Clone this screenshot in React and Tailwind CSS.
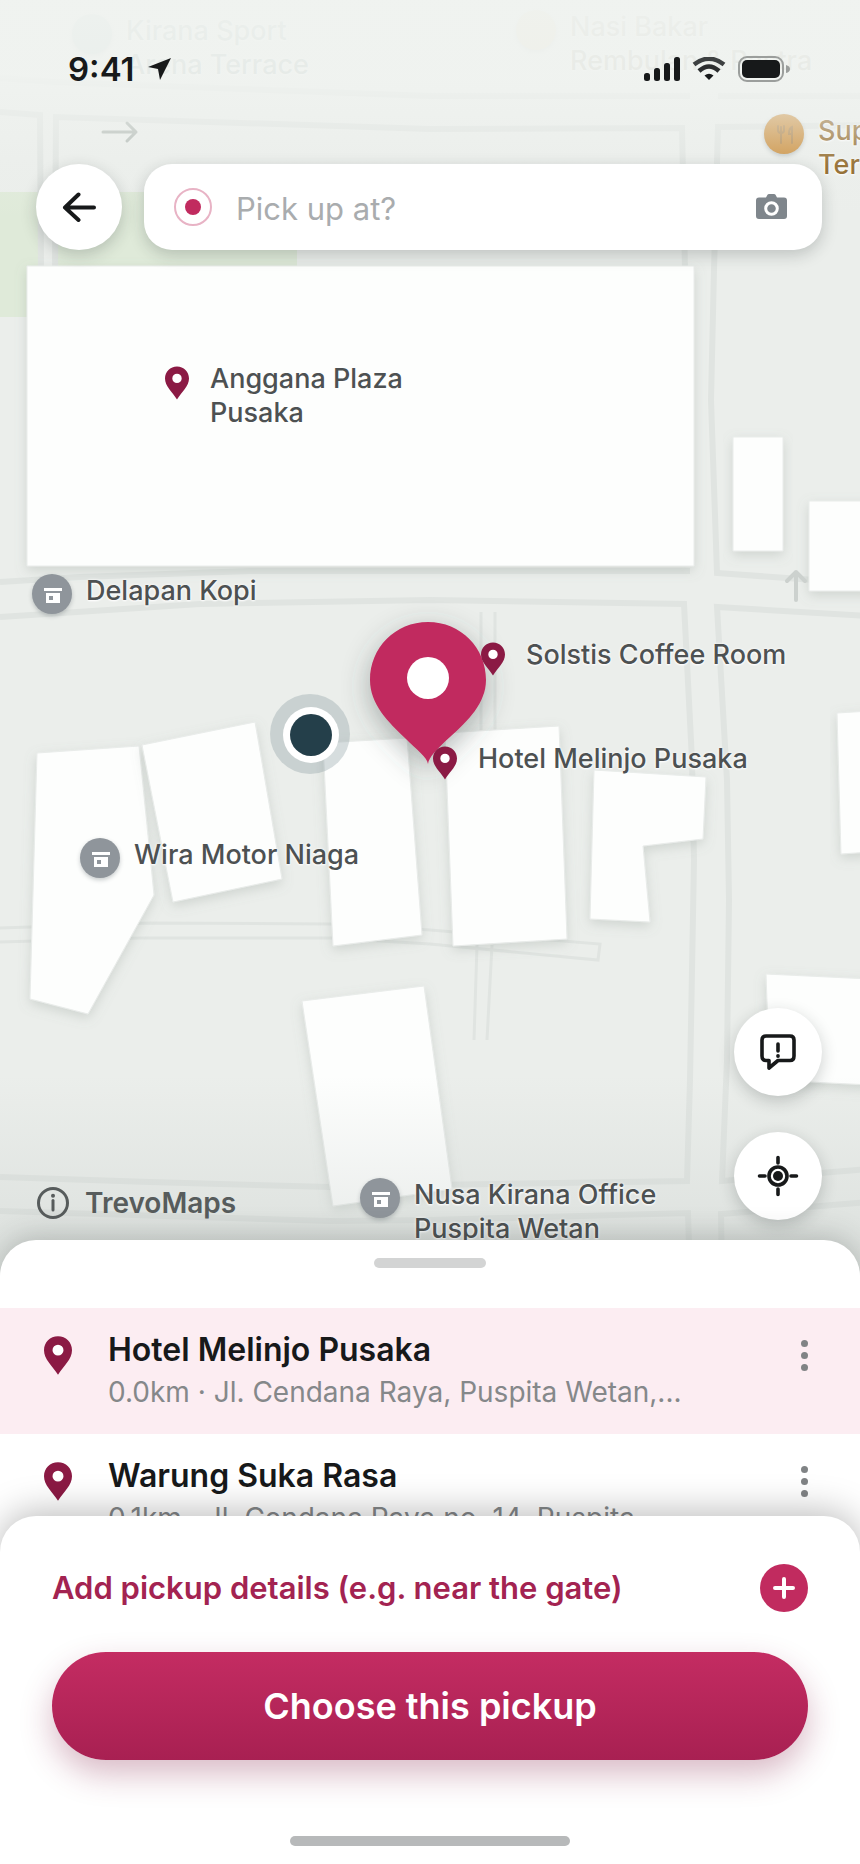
import React from "react";

const PIN_PATH =
  "M12 0C5.2 0 0 5.3 0 11.9C0 19.8 7.2 25 12 33C16.8 25 24 19.8 24 11.9C24 5.3 18.8 0 12 0ZM12 7.2A4.7 4.7 0 1 1 12 16.6A4.7 4.7 0 1 1 12 7.2Z";

function PinIcon({ className }) {
  return (
    <svg viewBox="0 0 24 33" className={className} aria-hidden="true">
      <circle cx="12" cy="12" r="6" fill="white" />
      <path d={PIN_PATH} fill="#8b1a44" fillRule="evenodd" />
    </svg>
  );
}

function ShopIcon() {
  return (
    <svg viewBox="0 0 40 40" className="h-10 w-10" aria-hidden="true">
      <path d="M12 14h18v3H12zM14 19h14v10H14z" fill="white" />
      <path d="M17 22h4v4h-4z" fill="#8f959b" />
    </svg>
  );
}

function ForkIcon() {
  return (
    <svg viewBox="0 0 40 40" className="h-10 w-10" fill="none" stroke="#a87b3e" strokeWidth="2" aria-hidden="true">
      <path d="M14 12v4q0 3 3 3q3 0 3-3v-4M17 13v16M28 29V13q-3 1-3 7h3" strokeLinecap="round" />
    </svg>
  );
}

function Marker({ kind }) {
  if (kind === "pin") {
    return (
      <span className="flex w-[42px] shrink-0 justify-center">
        <PinIcon className="mt-1 h-[34px] w-6" />
      </span>
    );
  }
  const tone = {
    shop: "bg-[#8f959b]",
    food: "bg-[#c98a35]",
    sport: "bg-[#a9c5c2]",
    snack: "bg-[#e3cfa4]",
  }[kind];
  return (
    <span className={`h-10 w-10 shrink-0 rounded-full shadow-[0_2px_4px_rgba(40,50,60,0.25)] ${tone}`}>
      {kind === "shop" && <ShopIcon />}
      {kind === "food" && <ForkIcon />}
    </span>
  );
}

const PLACES = [
  { kind: "sport", lines: ["Kirana Sport", "Arena Terrace"], at: "left-[72px] top-[14px]", tone: "text-[#7d9490]" },
  { kind: "snack", lines: ["Nasi Bakar", "Rembulan & Pastra"], at: "left-[516px] top-[10px]", tone: "text-[#94917f]" },
  { kind: "food", lines: ["Supra Kitchen", "Terrace"], at: "left-[764px] top-[114px]", tone: "text-[#8a5f1c]" },
  { kind: "pin", lines: ["Anggana Plaza", "Pusaka"], at: "left-[156px] top-[362px]", tone: "text-[#4d5152]" },
  { kind: "shop", lines: ["Delapan Kopi"], at: "left-[32px] top-[574px]", tone: "text-[#4d5152]" },
  { kind: "pin", lines: ["Solstis Coffee Room"], at: "left-[472px] top-[638px]", tone: "text-[#4d5152]" },
  { kind: "pin", lines: ["Hotel Melinjo Pusaka"], at: "left-[424px] top-[742px]", tone: "text-[#4d5152]" },
  { kind: "shop", lines: ["Wira Motor Niaga"], at: "left-[80px] top-[838px]", tone: "text-[#4d5152]" },
  { kind: "shop", lines: ["Nusa Kirana Office", "Puspita Wetan"], at: "left-[360px] top-[1178px]", tone: "text-[#4d5152]" },
];

function PlaceLabel({ place }) {
  const gap = place.kind === "pin" ? "gap-3" : "gap-3.5";
  return (
    <div className={`absolute flex items-start whitespace-nowrap ${gap} ${place.at}`}>
      <Marker kind={place.kind} />
      <p className={`text-[27px] leading-[34px] font-medium [text-shadow:0_0_3px_white,0_1px_2px_white] ${place.tone}`}>
        {place.lines.map((line) => (
          <span key={line} className="block">
            {line}
          </span>
        ))}
      </p>
    </div>
  );
}

const BUILDINGS = [
  "27,266 694,266 694,566 27,566",
  "37,753 139,746 154,895 88,1014 30,999",
  "142,745 255,722 282,879 173,902",
  "323,743 407,738 422,935 333,946",
  "445,733 559,726 567,939 453,946",
  "594,770 706,777 703,839 643,846 650,922 590,919",
  "302,1001 424,986 452,1189 333,1206",
  "733,437 783,437 783,551 733,551",
  "809,501 870,501 870,591 809,591",
  "837,713 870,711 870,852 841,854",
  "766,974 870,979 870,1085 770,1080",
];

function MapCanvas() {
  return (
    <svg
      viewBox="0 0 860 1276"
      preserveAspectRatio="xMidYMin slice"
      className="absolute inset-0 h-full w-full"
      aria-hidden="true"
    >
      <defs>
        <filter id="lift" x="-20%" y="-20%" width="140%" height="140%">
          <feDropShadow dx="0" dy="4" stdDeviation="6" floodColor="#7f8a84" floodOpacity="0.26" />
        </filter>
        <filter id="pinLift" x="-50%" y="-50%" width="200%" height="200%">
          <feDropShadow dx="0" dy="8" stdDeviation="14" floodColor="#3c4a4a" floodOpacity="0.4" />
        </filter>
      </defs>
      <rect width="860" height="1276" fill="#ebeeeb" />
      <path d="M0 192H39V317H0ZM57 192H297V270H57Z" fill="#dfead9" />
      <g fill="none" stroke="#e0e4e1" strokeWidth="6">
        <path d="M0 112L40 115L41 270M55 270L56 117L430 129L682 128L685 270" />
        <path d="M0 78L56 82L430 96H690M718 96H870M870 125L718 127L714 270L711 400L717 573L870 584" />
        <path d="M0 582L80 577L250 571H690" />
        <path d="M0 617L200 604L430 600L684 604L692 760L694 860L690 1080L687 1181L430 1185L330 1187L150 1182L0 1177" />
        <path d="M870 616L717 607L727 780L729 900L727 1060L722 1181L870 1169" />
        <path d="M0 1211L330 1221L430 1220L688 1213L690 1276M722 1276L721 1214L870 1202" />
      </g>
      <g fill="none" stroke="#e0e4e1" strokeWidth="3">
        <path d="M481 612V740M495 612V740M477 945L474 1040M492 945L487 1040" />
        <path d="M0 928L150 923L330 924L430 930L600 944L598 960L430 944L330 938H140L0 942" />
      </g>
      <g fill="#fdfefd" stroke="#e9ecea" strokeWidth="1">
        {BUILDINGS.map((points) => (
          <polygon key={points} points={points} filter="url(#lift)" />
        ))}
      </g>
      <g fill="none" stroke="#ccd1ce" strokeWidth="4" strokeLinecap="round" strokeLinejoin="round">
        <path d="M796 600V572M787 581L796 572L805 581" />
        <path d="M103 132H136M127 123L136 132L127 141" strokeWidth="3" stroke="#b0b8b3" />
      </g>
      <circle cx="310" cy="734" r="40" fill="#6f858b" fillOpacity="0.27" />
      <circle cx="311" cy="735" r="28" fill="white" />
      <circle cx="311" cy="735" r="21" fill="#243f4a" />
      <path
        filter="url(#pinLift)"
        fill="#c12b5f"
        d="M428 622C395 622 370 648 370 680C370 704 388 722 406 739C416 749 427 757 428 764C429 757 436 750 450 737C468 721 486 703 486 680C486 648 461 622 428 622Z"
      />
      <circle cx="428" cy="678" r="21" fill="white" />
    </svg>
  );
}

function StatusBar() {
  return (
    <div className="flex h-[164px] items-start justify-between pt-12 pr-[70px] pl-[68px] text-[#17191a]">
      <div className="flex items-center gap-[13px]">
        <span className="text-[33px] leading-[42px] font-semibold">9:41</span>
        <svg viewBox="0 0 23 22" className="h-[22px] w-[23px]" aria-hidden="true">
          <path d="M23 0L12 22L10 11L0 9Z" fill="currentColor" />
        </svg>
      </div>
      <div className="flex h-[42px] items-center gap-3">
        <svg viewBox="0 0 36 24" className="h-6 w-9" fill="currentColor" aria-hidden="true">
          <rect x="0" y="16" width="6" height="8" rx="2.5" />
          <rect x="10" y="11" width="6" height="13" rx="2.5" />
          <rect x="20" y="6" width="6" height="18" rx="2.5" />
          <rect x="30" y="0" width="6" height="24" rx="2.5" />
        </svg>
        <svg viewBox="0 0 34 24" className="h-6 w-[34px]" fill="none" stroke="currentColor" strokeWidth="4.500" aria-hidden="true">
          <path d="M2 7.500Q17 -4 32 7.500" stroke="#3d4041" />
          <path d="M7 14Q17 5 27 14" stroke="#2b2d2e" />
          <path d="M12.500 18.500Q17 15 21.500 18.500L17 23Z" fill="currentColor" stroke="none" />
        </svg>
        <svg viewBox="0 0 52 26" className="h-[26px] w-[52px]" aria-hidden="true">
          <rect x="1" y="1" width="44" height="24" rx="8" fill="none" stroke="#9b9e9c" strokeWidth="2" />
          <rect x="4" y="4" width="38" height="18" rx="5" fill="currentColor" />
          <path d="M48 9Q52 10 52 13Q52 16 48 17Z" fill="#9b9e9c" />
        </svg>
      </div>
    </div>
  );
}

const FLOAT = "shadow-[0_5px_16px_rgba(30,40,40,0.22)]";

function SearchHeader() {
  return (
    <div className="flex items-center gap-[22px] pr-[38px] pl-9">
      <button
        type="button"
        aria-label="Back"
        className={`flex h-[86px] w-[86px] shrink-0 items-center justify-center rounded-full bg-white text-[#17191a] ${FLOAT}`}
      >
        <svg viewBox="0 0 34 30" className="h-[30px] w-[34px]" fill="none" stroke="currentColor" strokeWidth="4" strokeLinecap="round" strokeLinejoin="round" aria-hidden="true">
          <path d="M32 15.500H3M16.500 2.500L3 15.500L16.500 28" />
        </svg>
      </button>
      <div className={`flex h-[86px] min-w-0 flex-1 items-center rounded-[28px] bg-white pr-[35px] pl-[30px] ${FLOAT}`}>
        <span className="flex h-[38px] w-[38px] shrink-0 items-center justify-center rounded-full border-2 border-[#e8b3c5]">
          <span className="h-4 w-4 rounded-full bg-[#c12b5f]" />
        </span>
        <input
          type="text"
          aria-label="Pick up at?"
          placeholder="Pick up at?"
          className="ml-6 h-12 min-w-0 flex-1 bg-transparent pt-0.5 text-[31px] leading-10 text-[#17191a] outline-none placeholder:text-[#a9acae]"
        />
        <button type="button" aria-label="Scan with camera" className="shrink-0">
          <svg viewBox="0 0 31 26" className="h-[26px] w-[31px]" aria-hidden="true">
            <path d="M10 3.500L11.500 0.800Q12 0 13 0H18Q19 0 19.500 0.800L21 3.500H28Q31 3.500 31 6.500V22Q31 25 28 25H3Q0 25 0 22V6.500Q0 3.500 3 3.500Z" fill="#7f868c" />
            <circle cx="15.500" cy="14.500" r="5.800" fill="none" stroke="white" strokeWidth="3" />
          </svg>
        </button>
      </div>
    </div>
  );
}

function MapFooter() {
  const round = `flex h-[88px] w-[88px] items-center justify-center rounded-full bg-white text-[#17191a] ${FLOAT}`;
  return (
    <div className="mt-auto flex items-end justify-between pr-[38px] pb-14 pl-9">
      <a href="#maps" className="flex items-center gap-[15px] text-[#575c5c]">
        <svg viewBox="0 0 34 34" className="h-[34px] w-[34px]" fill="none" stroke="currentColor" strokeWidth="3" aria-hidden="true">
          <circle cx="17" cy="17" r="14.500" />
          <path d="M17 14.500V24" strokeLinecap="round" />
          <circle cx="17" cy="9.800" r="2" fill="currentColor" stroke="none" />
        </svg>
        <span className="text-[28px] leading-[34px] font-semibold">TrevoMaps</span>
      </a>
      <div className="flex flex-col gap-9">
        <button type="button" aria-label="Report a problem" className={round}>
          <svg viewBox="0 0 36 36" className="h-9 w-9" fill="none" stroke="currentColor" strokeWidth="3.600" strokeLinejoin="round" strokeLinecap="round" aria-hidden="true">
            <path d="M6 2H30Q34 2 34 6V22Q34 26.500 30 26.500H18L9 34V26.500H6Q2 26.500 2 22V6Q2 2 6 2Z" />
            <path d="M18 10V17" />
            <circle cx="18" cy="22" r="1.900" fill="currentColor" stroke="none" />
          </svg>
        </button>
        <button type="button" aria-label="Centre on my location" className={round}>
          <svg viewBox="0 0 42 42" className="h-[42px] w-[42px]" fill="none" stroke="currentColor" strokeWidth="3.600" strokeLinecap="round" aria-hidden="true">
            <circle cx="21" cy="21" r="9" />
            <circle cx="21" cy="21" r="5" fill="currentColor" stroke="none" />
            <path d="M21 2.500V8M21 34V39.500M2.500 21H8M34 21H39.500" />
          </svg>
        </button>
      </div>
    </div>
  );
}

const STOPS = [
  { name: "Hotel Melinjo Pusaka", detail: "0.0km · Jl. Cendana Raya, Puspita Wetan,...", active: true },
  { name: "Warung Suka Rasa", detail: "0.1km · Jl. Cendana Raya no. 14, Puspita...", active: false },
];

function StopRow({ stop }) {
  return (
    <li className={`flex h-[126px] shrink-0 items-start pr-10 pl-11 ${stop.active ? "bg-[#fcedf2]" : ""}`}>
      <PinIcon className="mt-7 h-[39px] w-7 shrink-0" />
      <div className="ml-9 flex min-w-0 flex-1 flex-col gap-0.5 pt-[22px]">
        <h2 className="truncate text-[32px] leading-10 font-semibold text-[#17191a]">{stop.name}</h2>
        <p className="truncate text-[28px] leading-10 text-[#85888a]">{stop.detail}</p>
      </div>
      <button type="button" aria-label={`Options for ${stop.name}`} className="mt-8 flex w-8 shrink-0 flex-col items-center gap-[5px]">
        <span className="h-[7px] w-[7px] rounded-full bg-[#808385]" />
        <span className="h-[7px] w-[7px] rounded-full bg-[#808385]" />
        <span className="h-[7px] w-[7px] rounded-full bg-[#808385]" />
      </button>
    </li>
  );
}

export default function App() {
  return (
    <div className="flex min-h-screen flex-col bg-white font-['Inter',sans-serif]">
      <main className="relative -mb-9 flex min-h-[1276px] flex-1 flex-col overflow-hidden bg-[#ebeeeb]">
        <MapCanvas />
        <div className="absolute inset-x-0 bottom-0 h-[200px] bg-[linear-gradient(to_bottom,rgba(200,206,203,0),rgba(200,206,203,0.45))]" />
        {PLACES.map((place) => (
          <PlaceLabel key={place.lines[0]} place={place} />
        ))}
        <div className="absolute inset-x-0 top-0 h-[220px] bg-[linear-gradient(to_bottom,rgba(240,243,240,0.97)_0%,rgba(240,243,240,0.91)_35%,rgba(240,243,240,0.5)_57%,rgba(240,243,240,0.15)_75%,rgba(240,243,240,0)_100%)]" />
        <div className="relative flex flex-1 flex-col">
          <StatusBar />
          <SearchHeader />
          <MapFooter />
        </div>
      </main>

      <section className="relative rounded-t-[36px] bg-white shadow-[0_-4px_28px_rgba(50,60,55,0.25)]">
        <div className="flex h-[68px] justify-center pt-[18px]">
          <span className="h-[10px] w-28 rounded-full bg-[#d3d4d4]" />
        </div>
        <ul className="-mb-9 flex h-[244px] flex-col overflow-hidden">
          {STOPS.map((stop) => (
            <StopRow key={stop.name} stop={stop} />
          ))}
        </ul>
        <div className="relative rounded-t-[36px] bg-white px-[52px] pt-12 pb-[18px] shadow-[0_-4px_36px_rgba(0,0,0,0.27)]">
          <button type="button" className="flex w-full items-center justify-between text-left">
            <span className="text-[31px] leading-10 font-semibold text-[#a32351]">Add pickup details (e.g. near the gate)</span>
            <span className="flex h-12 w-12 shrink-0 items-center justify-center rounded-full bg-[#c12b5f]">
              <svg viewBox="0 0 22 22" className="h-[22px] w-[22px]" fill="none" stroke="white" strokeWidth="4" strokeLinecap="round" aria-hidden="true">
                <path d="M11 2V20M2 11H20" />
              </svg>
            </span>
          </button>
          <button
            type="button"
            className="mt-10 h-[108px] w-full rounded-full bg-linear-to-b from-[#c42c62] to-[#a82052] text-[36px] leading-10 font-semibold text-white shadow-[0_14px_32px_rgba(130,25,65,0.3)]"
          >
            Choose this pickup
          </button>
          <div className="mx-auto mt-[76px] h-[10px] w-[280px] rounded-full bg-[#b7b9ba]" />
        </div>
      </section>
    </div>
  );
}
